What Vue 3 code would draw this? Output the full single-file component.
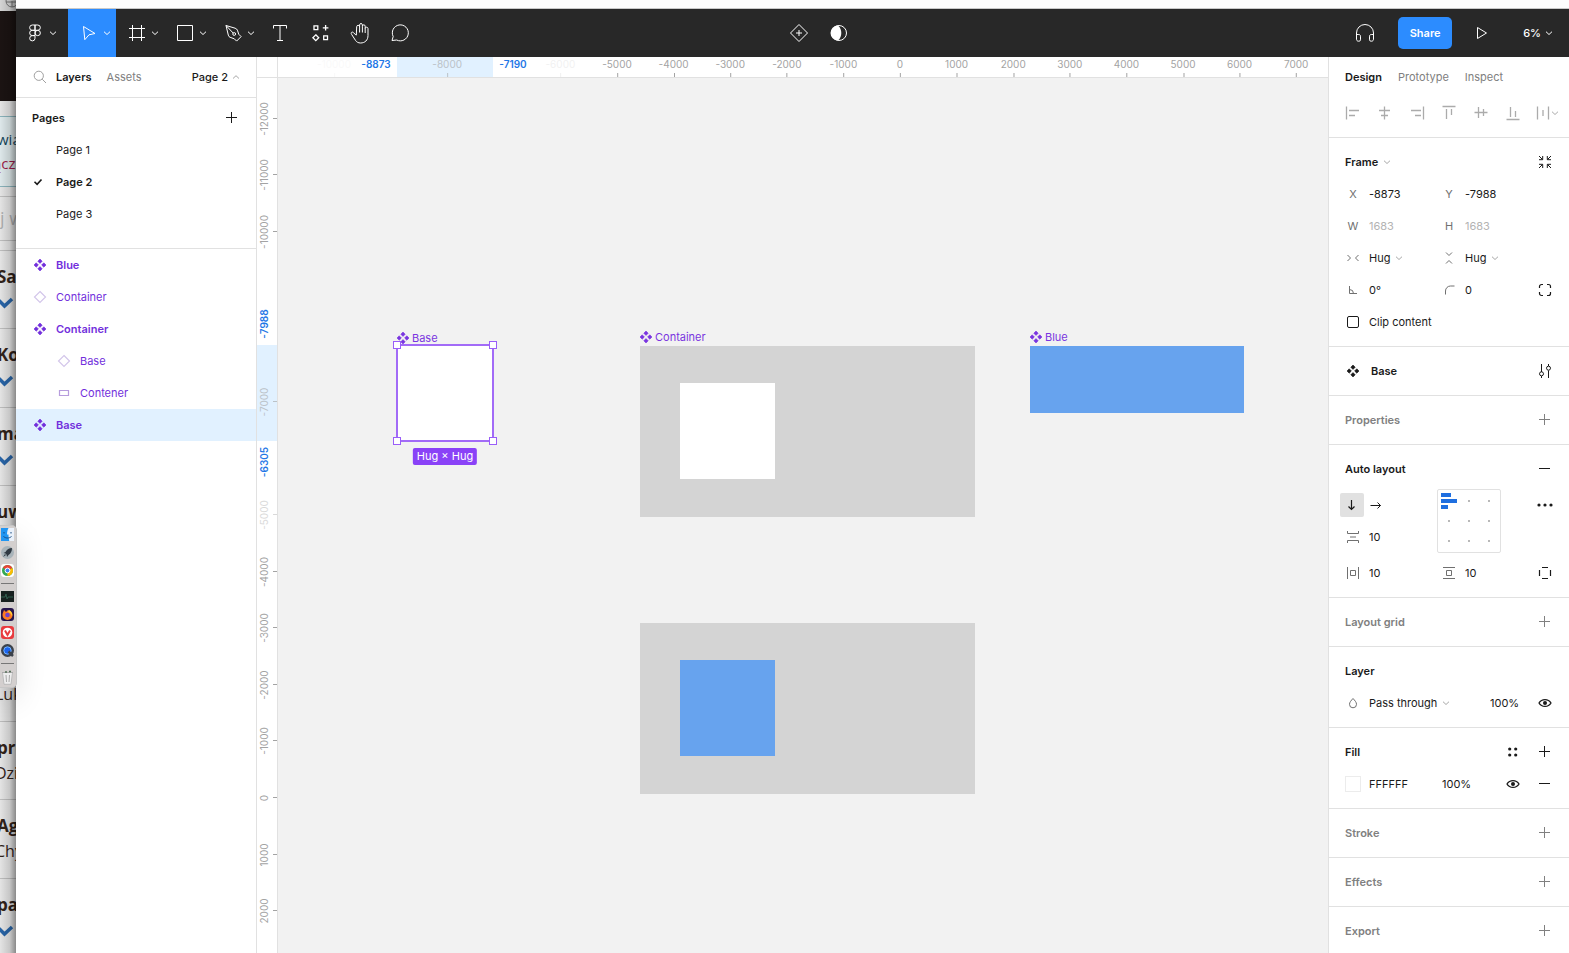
<script setup>
import { h, ref } from 'vue'

const quad = '<path d="M8 2l2.200 2.200L8 6.400 5.800 4.200zM8 9.600l2.200 2.200L8 14l-2.200-2.200zM4.200 5.800L6.400 8l-2.200 2.200L2 8zM11.800 5.800L14 8l-2.200 2.200L9.600 8z" fill="currentColor" stroke="currentColor" stroke-width=".6" stroke-linejoin="round"/>'
const shapes = {
  figma: '<path d="M12 4H9.300a2.650 2.650 0 0 0 0 5.300H12zM12 4h2.700a2.650 2.650 0 0 1 0 5.300H12zM12 9.300H9.300a2.650 2.650 0 0 0 0 5.300H12zM12 14.600H9.300A2.650 2.650 0 1 0 12 17.300z"/><circle cx="14.700" cy="12" r="2.650"/>',
  move: '<path d="M6.500 5.500l11.500 7-6 1.300-4.200 4.900z" stroke-linejoin="round"/>',
  frame: '<path d="M7.500 4v16M16.500 4v16M4 7.500h16M4 16.500h16"/>',
  rect: '<path d="M4.500 4.500h15v15h-15z"/>',
  pen: '<path d="M5 4.500l2.300 9.600c.2 1 .8 1.900 1.800 2.200l4.200 1.500 2.300 2.300 4.500-4.500-2.300-2.300-1.400-4.100c-.4-1-1.200-1.700-2.300-2zM5 4.500l7.300 7.700" stroke-linejoin="round"/><circle cx="13.200" cy="13" r="1.400"/>',
  text: '<path d="M5.500 7.500v-3h13v3M12 4.500v15M9 19.500h6"/>',
  resources: '<path d="M6 4.800h3.800v3.800H6zM15.700 14.800h3.800v3.800h-3.800zM17.600 4v5.600M14.800 6.800h5.600M7.800 13.800l2.900 2.900-2.900 2.900-2.900-2.900z" stroke-width="1.300"/>',
  hand: '<path d="M8 14.200L5.600 11.700c-.7-.7-1.600-.8-2.100-.3s-.4 1.200.1 2l4 6.100c1 1.500 2.600 2.500 5 2.500 4.300 0 7.400-2.800 7.400-7.500V7.600c0-.8-.6-1.400-1.400-1.400s-1.400.6-1.400 1.400V12M17.200 7.600V5.200c0-.8-.6-1.400-1.400-1.400s-1.400.6-1.400 1.400V11.500M14.400 5.200V3.900c0-.8-.6-1.400-1.400-1.400s-1.400.6-1.400 1.400V11.500M11.600 5.700c0-.8-.7-1.400-1.500-1.400s-1.400.6-1.400 1.400L8.300 14.200" stroke-linejoin="round"/>',
  comment: '<path d="M4 19.500l1.200-4A8 8 0 1 1 8.700 19z" stroke-linejoin="round"/>',
  diamondPlus: '<path d="M12 3.500l8.500 8.500-8.500 8.500L3.500 12zM12 9v6M9 12h6" stroke-linejoin="round"/>',
  contrast: '<circle cx="12" cy="12" r="7.500"/><path d="M12 4.500a7.500 7.500 0 0 0 0 15c2.300-2 3.300-4.600 3.300-7.500S14.300 6.500 12 4.500z" fill="currentColor" stroke="none" transform="translate(-1 0)"/>',
  headphones: '<path d="M3.500 18v-6a8.500 8.500 0 0 1 17 0v6M3.500 13.500h2.300c1 0 1.700.7 1.700 1.700v3.600c0 .8-.6 1.400-1.400 1.400h-.7c-1.100 0-1.900-.8-1.900-2zM20.500 13.500h-2.300c-1 0-1.700.7-1.700 1.700v3.600c0 .8.6 1.400 1.400 1.400h.7c1.100 0 1.900-.8 1.900-2z"/>',
  play: '<path d="M7.500 6.500v11l9-5.500z" stroke-linejoin="round"/>',
  down: '<path d="M3 4.700l3 2.800 3-2.800"/>',
  up: '<path d="M3 7.500l3-2.800 3 2.800"/>',
  search: '<circle cx="6.800" cy="6.800" r="4.600"/><path d="M10.200 10.200L14 14"/>',
  plus: '<path d="M7.500 2v11M2 7.500h11"/>',
  minus: '<path d="M2 7.500h11"/>',
  check: '<path d="M2.500 7.800l2.600 2.600L9.500 5.500" stroke-width="1.600"/>',
  component: quad,
  instance: '<path d="M8 2.500L13.500 8 8 13.500 2.500 8z" stroke-width="1.200"/>',
  layer: '<path d="M3.500 5.500h9v5h-9z" stroke-width="1.200"/>',
  alLeft: '<path d="M1.500 1.500v13M4 5.500h10M4 10.500h6" stroke-width="1.300"/>',
  alCenter: '<path d="M7.500 1.500v13M2 5.500h11M4 10.500h7" stroke-width="1.300"/>',
  alRight: '<path d="M14.500 1.500v13M2 5.500h10M6 10.500h6" stroke-width="1.300"/>',
  alTop: '<path d="M1.500 1.500h13M5.500 4v10M10.500 4v6" stroke-width="1.300"/>',
  alMiddle: '<path d="M1.500 7.500h13M5.500 2v11M10.500 4v7" stroke-width="1.300"/>',
  alBottom: '<path d="M1.500 14.500h13M5.500 2v10M10.500 6v6" stroke-width="1.300"/>',
  distribute: '<path d="M2.500 1.500v13M13.500 1.500v13M8 5v6" stroke-width="1.300"/>',
  shrink: '<path d="M2 2l3.500 3.500M2 5.700h3.700V2M14 2l-3.500 3.500M14 5.700h-3.700V2M2 14l3.500-3.500M2 10.300h3.700V14M14 14l-3.500-3.500M14 10.300h-3.700V14"/>',
  hugX: '<path d="M2.500 5l3 3-3 3M13.500 5l-3 3 3 3"/>',
  hugY: '<path d="M5 2.500l3 3 3-3M5 13.500l3-3 3 3"/>',
  angle: '<path d="M4.500 4v7.500H12M4.500 7.500a4 4 0 0 1 4 4"/>',
  radius: '<path d="M4.500 12.500V9a5 5 0 0 1 5-5h4"/>',
  corners: '<path d="M2.500 6V4.500a2 2 0 0 1 2-2H6M10 2.500h1.500a2 2 0 0 1 2 2V6M13.500 10v1.500a2 2 0 0 1-2 2H10M6 13.500H4.500a2 2 0 0 1-2-2V10" stroke-width="1.200"/>',
  tune: '<path d="M4.500 1v8M4.500 13v2M11.500 1v2M11.500 7.500V15"/><circle cx="4.500" cy="10.800" r="2"/><circle cx="11.500" cy="5.200" r="2"/>',
  arrowDown: '<path d="M7.500 3v9.500M4.500 9.500l3 3 3-3" stroke-width="1.200"/>',
  arrowRight: '<path d="M2.500 8.500h10M9.500 5.500l3 3-3 3"/>',
  gapY: '<path d="M2.500 2v2.500h11V2M2.500 14v-2.500h11V14M5 8h6"/>',
  padX: '<path d="M2.500 2v12M13.500 2v12M5.500 5.500h5v5h-5z"/>',
  padY: '<path d="M2 2.500h12M2 13.500h12M5.500 5.500h5v5h-5z"/>',
  padAll: '<path d="M5 2.500h6M5 13.500h6M2.500 5v6M13.500 5v6" stroke-width="1.200"/>',
  more: '<g fill="currentColor" stroke="none"><circle cx="2" cy="8" r="1.600"/><circle cx="8" cy="8" r="1.600"/><circle cx="14" cy="8" r="1.600"/></g>',
  styles: '<g fill="currentColor" stroke="none"><circle cx="4.700" cy="5" r="1.600"/><circle cx="10.700" cy="5" r="1.600"/><circle cx="4.700" cy="11" r="1.600"/><circle cx="10.700" cy="11" r="1.600"/></g>',
  drop: '<path d="M8 3.500c1.800 2 3.500 3.700 3.500 5.800a3.500 3.500 0 0 1-7 0C4.500 7.200 6.200 5.500 8 3.500z"/>',
  eye: '<path d="M2 8c2.800-4.600 9.200-4.600 12 0-2.800 4.600-9.200 4.600-12 0z" stroke-width="1.300"/><circle cx="8" cy="8" r="2" fill="currentColor" stroke="none"/>',
  tick: '<path d="M-1 6.500l5.500 5.500L12 5" stroke="#2a68ad" stroke-width="3.500"/>',
  globe: '<circle cx="12" cy="1" r="6"/><path d="M6 2h12M12 1v6"/>'
}
const Icon = (p) => h('svg', {
  width: p.s || 16, height: p.s || 16, viewBox: `0 0 ${p.s || 16} ${p.s || 16}`,
  fill: 'none', stroke: 'currentColor', 'aria-hidden': 'true', innerHTML: shapes[p.n]
})
Icon.props = ['n', 's']

const tools = [
  { n: 'figma', label: 'Main menu', menu: true, cls: 'main' },
  { n: 'move', label: 'Move', menu: true, cls: 'active' },
  { n: 'frame', label: 'Frame', menu: true },
  { n: 'rect', label: 'Rectangle', menu: true },
  { n: 'pen', label: 'Pen', menu: true },
  { n: 'text', label: 'Text' },
  { n: 'resources', label: 'Resources' },
  { n: 'hand', label: 'Hand' },
  { n: 'comment', label: 'Comment' }
]
const pages = ['Page 1', 'Page 2', 'Page 3']
const page = ref('Page 2')
const layers = [
  { t: 'Blue', n: 'component' },
  { t: 'Container', n: 'instance' },
  { t: 'Container', n: 'component' },
  { t: 'Base', n: 'instance', nested: true },
  { t: 'Contener', n: 'layer', nested: true },
  { t: 'Base', n: 'component', selected: true }
]
const aligns = ['alLeft', 'alCenter', 'alRight', 'alTop', 'alMiddle', 'alBottom']

const step = 56.6
const fade = { 'x-8000': 'dim', 'x-6000': 'ghost', 'x-10000': 'trace', 'y-7000': 'dim', 'y-5000': 'pale' }
const marks = (axis, values, zero) => values.map((v) => ({ v, at: zero + (v / 1000) * step, cls: fade[axis + v] }))
const xMarks = marks('x', [-10000, -8000, -6000, -5000, -4000, -3000, -2000, -1000, 0, 1000, 2000, 3000, 4000, 5000, 6000, 7000], 622)
const yMarks = marks('y', [-12000, -11000, -10000, -7000, -5000, -4000, -3000, -2000, -1000, 0, 1000, 2000], 720)

const mail = [
  { a: 'Sa', tick: true }, { a: 'Ko', tick: true }, { a: 'ma', tick: true }, { a: 'uw', tick: true },
  { a: '', b: '' }, { a: '', b: 'Luk' }, { a: 'pro', b: 'Dzi' }, { a: 'Ag', b: 'Chy' }, { a: 'pa', tick: true }
]
const clip = ref(false)
</script>

<template>
  <div class="desktop">
    <aside class="behind">
      <div class="tabbar"><Icon n="globe" :s="24" /></div>
      <div class="banner"></div>
      <div class="notice"><span>wią</span><span class="red">ącz</span></div>
      <div class="find">j w</div>
      <div v-for="(m, i) in mail" :key="i" class="mail">
        <b>{{ m.a }}</b>
        <Icon v-if="m.tick" n="tick" />
        <span v-else>{{ m.b }}</span>
      </div>
    </aside>

    <div class="window">
      <div class="titlebar"></div>
      <header class="toolbar">
        <div class="tools">
          <button v-for="t in tools" :key="t.n" class="tool" :class="[t.cls, { menu: t.menu }]" :aria-label="t.label">
            <Icon :n="t.n" :s="24" /><Icon v-if="t.menu" n="down" :s="12" />
          </button>
        </div>
        <div class="middle">
          <button class="tool" aria-label="Create component"><Icon n="diamondPlus" :s="24" /></button>
          <button class="tool" aria-label="Mask"><Icon n="contrast" :s="24" /></button>
        </div>
        <div class="actions">
          <button class="tool" aria-label="Audio"><Icon n="headphones" :s="24" /></button>
          <button class="share">Share</button>
          <button class="tool" aria-label="Present"><Icon n="play" :s="24" /></button>
          <button class="zoom">6%<Icon n="down" :s="12" /></button>
        </div>
      </header>

      <div class="body">
        <nav class="left">
          <div class="tabs">
            <button class="cell" aria-label="Search"><Icon n="search" /></button>
            <button class="tab on">Layers</button>
            <button class="tab">Assets</button>
            <button class="picker">Page 2<Icon n="up" :s="12" /></button>
          </div>
          <section class="pages">
            <div class="head"><h2>Pages</h2><button class="cell" aria-label="Add page"><Icon n="plus" /></button></div>
            <button v-for="p in pages" :key="p" class="item" :class="{ current: p === page }" @click="page = p">
              <span class="cell"><Icon v-if="p === page" n="check" /></span>{{ p }}
            </button>
          </section>
          <div class="layers">
            <button v-for="(l, i) in layers" :key="i" class="item" :class="[l.n, { nested: l.nested, selected: l.selected }]">
              <span class="cell"><Icon :n="l.n" /></span>{{ l.t }}
            </button>
          </div>
        </nav>

        <main class="stage">
          <div class="corner"></div>
          <div class="ruler rx">
            <div class="range"></div>
            <span v-for="m in xMarks" :key="m.v" class="mark" :class="m.cls" :style="{ left: m.at + 'px' }">{{ m.v }}</span>
            <span class="mark edge start">-8873</span>
            <span class="mark edge end">-7190</span>
          </div>
          <div class="ruler ry">
            <div class="range"></div>
            <span v-for="m in yMarks" :key="m.v" class="mark" :class="m.cls" :style="{ top: m.at + 'px' }"><i>{{ m.v }}</i></span>
            <span class="mark edge start"><i>-7988</i></span>
            <span class="mark edge end"><i>-6305</i></span>
          </div>
          <div class="canvas">
            <div class="node base">
              <span class="label"><Icon n="component" />Base</span>
              <i class="handle tl"></i><i class="handle tr"></i><i class="handle bl"></i><i class="handle br"></i>
              <span class="size">Hug × Hug</span>
            </div>
            <div class="node container one">
              <span class="label"><Icon n="component" />Container</span>
              <div class="inner"></div>
            </div>
            <div class="node container two"><div class="inner blue-fill"></div></div>
            <div class="node blue blue-fill"><span class="label"><Icon n="component" />Blue</span></div>
          </div>
        </main>

        <aside class="right">
          <section class="top">
            <div class="modes">
              <button class="tab on">Design</button><button class="tab">Prototype</button><button class="tab">Inspect</button>
            </div>
            <div class="row aligns">
              <button v-for="a in aligns" :key="a" class="cell" :aria-label="a"><Icon :n="a" /></button>
              <button class="cell" aria-label="Distribute"><Icon n="distribute" /><Icon n="down" :s="12" /></button>
            </div>
          </section>

          <section>
            <div class="head"><h2>Frame</h2><Icon class="faint" n="down" :s="12" /><button class="cell last" aria-label="Resize to fit"><Icon n="shrink" /></button></div>
            <div class="row">
              <label class="field"><span class="cell">X</span><input value="-8873" /></label>
              <label class="field"><span class="cell">Y</span><input value="-7988" /></label>
            </div>
            <div class="row">
              <label class="field"><span class="cell">W</span><input value="1683" disabled /></label>
              <label class="field"><span class="cell">H</span><input value="1683" disabled /></label>
            </div>
            <div class="row">
              <label class="field"><span class="cell"><Icon n="hugX" /></span><select class="hug" aria-label="Horizontal resizing"><option>Hug</option></select><Icon class="faint" n="down" :s="12" /></label>
              <label class="field"><span class="cell"><Icon n="hugY" /></span><select class="hug" aria-label="Vertical resizing"><option>Hug</option></select><Icon class="faint" n="down" :s="12" /></label>
            </div>
            <div class="row">
              <label class="field"><span class="cell"><Icon n="angle" /></span><input value="0°" aria-label="Rotation" /></label>
              <label class="field"><span class="cell"><Icon n="radius" /></span><input value="0" aria-label="Corner radius" /></label>
              <button class="cell last" aria-label="Independent corners"><Icon n="corners" /></button>
            </div>
            <div class="row"><label class="field wide"><span class="cell"><input v-model="clip" type="checkbox" /></span>Clip content</label></div>
          </section>

          <section>
            <div class="row"><span class="cell dark"><Icon n="component" /></span><h2 class="name">Base</h2><button class="cell last dark" aria-label="Configure component"><Icon n="tune" /></button></div>
          </section>

          <section class="empty"><div class="head"><h2>Properties</h2><button class="cell last" aria-label="Add property"><Icon n="plus" /></button></div></section>

          <section>
            <div class="head"><h2>Auto layout</h2><button class="cell last" aria-label="Remove auto layout"><Icon n="minus" /></button></div>
            <div class="auto">
              <div class="dir">
                <button class="pressed" aria-label="Vertical"><Icon n="arrowDown" /></button>
                <button aria-label="Horizontal"><Icon n="arrowRight" /></button>
              </div>
              <div class="pad"><div class="bars"><i></i><i></i><i></i></div><span v-for="n in 8" :key="n"></span></div>
              <button class="cell more" aria-label="Advanced layout"><Icon n="more" /></button>
              <label class="field gap"><span class="cell"><Icon n="gapY" /></span><input value="10" aria-label="Spacing" /></label>
            </div>
            <div class="row padding">
              <label class="field"><span class="cell"><Icon n="padX" /></span><input value="10" aria-label="Horizontal padding" /></label>
              <label class="field"><span class="cell"><Icon n="padY" /></span><input value="10" aria-label="Vertical padding" /></label>
              <button class="cell last" aria-label="Individual padding"><Icon n="padAll" /></button>
            </div>
          </section>

          <section class="empty"><div class="head"><h2>Layout grid</h2><button class="cell last" aria-label="Add grid"><Icon n="plus" /></button></div></section>

          <section>
            <div class="head"><h2>Layer</h2></div>
            <div class="row">
              <label class="field wide"><span class="cell"><Icon n="drop" /></span><select class="blend" aria-label="Blend mode"><option>Pass through</option></select><Icon class="faint" n="down" :s="12" /></label>
              <input class="percent last" value="100%" aria-label="Layer opacity" />
              <button class="cell" aria-label="Toggle layer"><Icon n="eye" /></button>
            </div>
          </section>

          <section>
            <div class="head"><h2>Fill</h2><button class="cell last" aria-label="Fill styles"><Icon n="styles" /></button><button class="cell" aria-label="Add fill"><Icon n="plus" /></button></div>
            <div class="row">
              <label class="field"><span class="cell"><i class="swatch"></i></span><input value="FFFFFF" aria-label="Fill colour" /></label>
              <input class="percent fillp" value="100%" aria-label="Fill opacity" />
              <button class="cell last" aria-label="Toggle fill"><Icon n="eye" /></button>
              <button class="cell" aria-label="Remove fill"><Icon n="minus" /></button>
            </div>
          </section>

          <section v-for="s in ['Stroke', 'Effects', 'Export']" :key="s" class="empty">
            <div class="head"><h2>{{ s }}</h2><button class="cell last" :aria-label="'Add ' + s"><Icon n="plus" /></button></div>
          </section>
        </aside>
      </div>
    </div>

    <div class="dock" aria-hidden="true">
      <svg viewBox="0 0 13 13"><path fill="#eaf1fa" d="M0 0h13v13H0z" /><path fill="#2196f3" d="M0 0h7.500c-1 2-1.500 4-1.500 6.500h1.500c0 2.500.3 4.500.8 6.500H0z" /><path d="M3 4v1.500M10 4v1.500M2.500 8.500c2.500 2 5.500 2 8 0" stroke="#174a80" fill="none" /></svg>
      <svg viewBox="0 0 13 13"><circle cx="6.500" cy="6.500" r="6.500" fill="#a9b4ba" /><path fill="#303942" d="M11 2C8 2 6 3.500 4.500 6L2.500 7l2 .5 1 1 .5 2.500 1.500-2C10 7.500 11 5 11 2zM4 8l-2 3 3-2z" /></svg>
      <svg viewBox="0 0 13 13"><rect width="13" height="13" rx="3" fill="#fff" /><circle cx="6.500" cy="6.500" r="5.500" fill="#34a853" /><path d="M6.500 6.500L1.800 3.700a5.500 5.500 0 0 1 9.600.3z" fill="#ea4335" /><path d="M6.500 6.500L11.400 4a5.500 5.500 0 0 1-4.900 8z" fill="#fbbc05" /><circle cx="6.500" cy="6.500" r="2.400" fill="#4285f4" stroke="#fff" /></svg>
      <hr />
      <svg viewBox="0 0 13 13"><path fill="#17201f" d="M0 1h13v11H0z" /><path d="M0 7h4l1-3 1 5 1-2h5" stroke="#2f5c4c" fill="none" /></svg>
      <svg viewBox="0 0 13 13"><rect width="13" height="13" rx="3" fill="#25144c" /><path fill="#ff7a22" d="M3 2l2 2 2-2c3 1 4.500 3 4.500 5a5 5 0 0 1-10 0C1.500 5 2.500 4 3 2z" /><circle cx="6.500" cy="7" r="2.300" fill="#7042c9" /><path fill="#ffd13b" d="M8 2c2.500 1 4 4 3 6.500C10.500 6 9.500 5 7 4z" /></svg>
      <svg viewBox="0 0 13 13"><rect width="13" height="13" rx="3" fill="#e83a3e" /><circle cx="6.500" cy="6.500" r="4.800" fill="#fff" /><path d="M4 4.500l2.500 4.500L9 4.500" stroke="#e83a3e" stroke-width="2" fill="none" /></svg>
      <svg viewBox="0 0 13 13"><circle cx="6.500" cy="6.500" r="6.500" fill="#3c424b" /><circle cx="6.500" cy="6.500" r="3.700" fill="#1c65ee" stroke="#79b6ff" /><path d="M7.500 7.500L12 12" stroke="#3c424b" stroke-width="2.500" /></svg>
      <hr />
      <svg class="bin" viewBox="0 0 13 15"><path d="M1.500 2.500L3 14.300h7L11.500 2.500z" fill="#eee" stroke="#bbb" /><path d="M1 2.500h11M5 5l.5 7M8.500 5L8 12" stroke="#aaa" /><path d="M4 2h2M8 1.500h2" stroke="#55705a" stroke-width="1.500" /></svg>
    </div>
  </div>
</template>

<style>
html, body { margin: 0; overflow: hidden; }
</style>

<style scoped>
* { box-sizing: border-box; }
.desktop { position: relative; display: flex; height: 100vh; overflow: hidden; font: 11px/16px Inter, "Liberation Sans", sans-serif; color: #1a1a1a; background: #fff; }
button, input, select { font: inherit; color: inherit; border: 0; padding: 0; margin: 0; background: none; outline: 0; border-radius: 0; min-width: 0; }
select { appearance: none; }
h2 { margin: 0; font-size: 11px; font-weight: 600; }
svg { flex: none; display: block; }

.behind { position: relative; width: 16px; flex: none; overflow: hidden; background: #ededed; font-family: "Open Sans", sans-serif; color: #33241a; white-space: nowrap; }
.behind::after { content: ""; position: absolute; inset: 0; background: linear-gradient(90deg, rgba(0,0,0,.04), rgba(0,0,0,.16) 60%, rgba(0,0,0,.42)); }
.tabbar { height: 11px; background: #ddd; color: #777; }
.banner { height: 90px; background: #1c1413; }
.notice { height: 71px; margin-top: 15px; padding-top: 10px; border: solid #8fb9c2; border-width: 1px 0; background: #e6f1f3; font-size: 15px; font-weight: 500; line-height: 24px; color: #164a60; display: flex; flex-direction: column; }
.notice span { margin-left: -3px; }
.notice .red { color: #a41e4c; margin-left: -7px; }
.find { height: 45px; margin: 9px 0; border: solid #c4c4c4; border-width: 1px 0; font-size: 18px; line-height: 43px; color: #b5b5b5; }
.mail { height: 78px; border-top: 1px solid #c4c4c4; padding-top: 14px; font-size: 16px; line-height: 24px; }
.mail:nth-child(even) { height: 79px; }
.mail b { display: block; height: 24px; font-size: 17px; margin-left: -3px; }
.mail span { display: block; margin: 1px 0 0 -5px; }
.mail svg { margin: 5px 0 0 0; }

.window { flex: 1; min-width: 0; display: flex; flex-direction: column; background: #fff; }
.titlebar { flex: none; height: 9px; background: #fdfdfd; border-bottom: 1px solid #c8c8c8; }
.toolbar { flex: none; height: 48px; display: grid; grid-template-columns: 1fr auto 1fr; background: #282828; color: #fff; }
.tools, .middle, .actions { display: flex; align-items: center; }
.tool { width: 40px; height: 48px; display: flex; align-items: center; justify-content: center; }
.tool.menu { width: 48px; justify-content: flex-start; padding-left: 9px; }
.tool.main { width: 52px; padding-left: 7px; }
.tool.active { background: #2c8cff; }
.middle { padding-left: 52px; }
.actions { justify-content: flex-end; padding-right: 14px; font-weight: 500; }
.share { width: 54px; height: 32px; border-radius: 5px; background: #2c8cff; font-weight: 600; margin: 0 10px 0 13px; }
.zoom { display: flex; align-items: center; gap: 2px; margin-left: 21px; }

.body { flex: 1; min-height: 0; display: flex; }
.left { width: 241px; flex: none; border-right: 1px solid #e1e1e1; }
.cell { width: 32px; height: 32px; flex: none; display: flex; align-items: center; justify-content: center; }
.tabs { height: 41px; display: flex; align-items: center; padding: 0 14px 0 8px; border-bottom: 1px solid #e1e1e1; }
.tabs .cell { color: #a0a0a0; }
.tab { color: #808080; }
.tab.on { color: #1a1a1a; font-weight: 600; }
.tabs .tab { margin-right: 15px; }
.picker { margin-left: auto; display: flex; align-items: center; gap: 2px; font-weight: 500; }
.picker svg, .faint { color: #a8a8a8; }
.pages { padding: 4px 0 18px; border-bottom: 1px solid #e1e1e1; }
.pages .head { display: flex; align-items: center; justify-content: space-between; padding: 0 8px 0 16px; }
.item { width: 100%; height: 32px; padding: 0 8px; display: flex; align-items: center; text-align: left; }
.item.current { font-weight: 600; }
.layers .item { color: #722fdc; }
.layers .nested { padding-left: 32px; }
.layers .component { font-weight: 600; }
.instance svg, .layer svg { color: #d3c6ea; }
.layer svg { color: #b79ddd; }
.layers .selected { background: #e1f1ff; }

.stage { flex: 1; min-width: 0; display: grid; grid-template: 21px 1fr / 21px 1fr; overflow: hidden; }
.corner, .ry { border-right: 1px solid #e1e1e1; }
.corner, .rx { border-bottom: 1px solid #e1e1e1; }
.ruler { position: relative; overflow: hidden; font-size: 10px; line-height: 14px; color: #a3a3a3; }
.mark { position: absolute; }
.rx .mark { top: 0; height: 20px; transform: translateX(-50%); }
.ry .mark { left: 0; width: 20px; height: 14px; transform: translateY(-50%); }
.mark::after { content: ""; position: absolute; background: #a3a3a3; }
.rx .mark::after { left: 50%; bottom: 0; width: 1px; height: 4px; }
.ry .mark::after { right: 0; top: 6px; width: 4px; height: 1px; }
.mark.edge::after { display: none; }
.ry i { position: absolute; left: 7px; top: 7px; font-style: normal; transform: translate(-50%, -50%) rotate(-90deg); }
.edge { color: #1f78e6; font-weight: 600; }
.dim { opacity: .6; }
.ghost { opacity: .15; }
.trace { opacity: .06; }
.pale { opacity: .4; }
.range { position: absolute; background: #e1f1ff; }
.rx .range { left: 119px; width: 96px; top: 0; height: 20px; }
.ry .range { top: 267px; height: 96px; left: 0; width: 20px; }
.rx .start { left: 98px; }
.rx .end { left: 235px; }
.ry .start { top: 246px; }
.ry .end { top: 384px; }
.canvas { position: relative; overflow: hidden; background: #f2f2f2; }
.node { position: absolute; }
.base { left: 118px; top: 266px; width: 98px; height: 98px; background: #fff; border: 2px solid #a26bf7; }
.container { left: 362px; width: 335px; height: 171px; background: #d4d4d4; }
.one { top: 268px; }
.two { top: 545px; }
.inner { position: absolute; left: 40px; top: 37px; width: 95px; height: 96px; background: #fff; }
.blue { left: 752px; top: 268px; width: 214px; height: 67px; }
.blue-fill { background: #67a3ee; }
.label { position: absolute; left: -2px; bottom: 100%; display: flex; align-items: center; gap: 1px; color: #7a35e0; padding-bottom: 1px; }
.base .label { left: -3px; padding: 0; }
.handle { position: absolute; width: 8px; height: 8px; background: #fff; border: 1px solid #9a5ef8; }
.tl, .tr { top: -5px; }
.bl, .br { bottom: -5px; }
.tl, .bl { left: -5px; }
.tr, .br { right: -5px; }
.size { position: absolute; left: 50%; top: 102px; transform: translateX(-50%); padding: 0 4px; border-radius: 2px; background: #8a42f7; color: #fff; white-space: nowrap; line-height: 17px; }

.right { width: 241px; flex: none; border-left: 1px solid #e1e1e1; overflow: hidden; }
.right section { padding: 8px 0; border-bottom: 1px solid #e1e1e1; }
.right section.top { padding: 0 0 8px; }
.modes { height: 40px; display: flex; align-items: center; padding-left: 16px; gap: 16px; }
.row, .right .head { height: 32px; display: flex; align-items: center; padding: 0 8px; }
.right .head { padding-left: 16px; }
.right h2 + svg { margin-left: 3px; }
.aligns { color: #ababab; }
.aligns svg + svg { margin: 0 -4px 0 -2px; }
.aligns .cell:last-child { justify-content: flex-start; padding-left: 6px; }
.last { margin-left: auto; }
.field { width: 96px; flex: none; display: flex; align-items: center; }
.field .cell { color: #707070; }
.field input { width: 60px; height: 24px; }
.field input:disabled { color: #b3b3b3; }
.field.wide { width: auto; }
.field input[type="checkbox"] { appearance: none; width: 12px; height: 12px; border: 1px solid #1a1a1a; border-radius: 2px; }
.hug { width: 24px; }
.blend { width: 71px; }
.percent { width: 39px; }
.fillp { width: 40px; margin-left: 9px; }
.name { margin-left: 2px; }
.empty { color: #808080; }
.swatch { width: 16px; height: 16px; border: 1px solid #ececec; }
.auto { display: grid; grid-template-columns: 96px 96px 32px; grid-template-rows: 32px 32px; padding: 4px 8px 0; }
.dir { display: flex; align-items: center; padding-left: 3px; }
.dir button { width: 24px; height: 24px; display: flex; align-items: center; justify-content: center; border-radius: 2px; }
.dir .pressed { background: #e1e1e1; }
.pad { grid-area: 1 / 2 / 3 / 3; width: 64px; height: 64px; margin-left: 4px; padding: 1px; border: 1px solid #e1e1e1; border-radius: 2px; display: grid; grid-template-columns: repeat(3, 20px); grid-template-rows: repeat(3, 20px); place-items: center; }
.more { grid-area: 1 / 3; }
.gap { grid-area: 2 / 1; }
.padding { margin-top: 4px; }
.pad span { width: 2px; height: 2px; background: #b8b8b8; }
.bars { display: grid; gap: 2px; }
.bars i { width: 10px; height: 4px; background: #1f6fe0; }
.bars i:nth-child(2) { width: 16px; }
.bars i:nth-child(3) { width: 7px; }

.dock { position: absolute; left: -4px; top: 525px; width: 21px; padding: 2px 3px 2px 4px; display: flex; flex-direction: column; gap: 5px; border-radius: 0 5px 5px 0; background: #d3cfce; border: 1px solid #c6c6c6; box-shadow: 0 12px 30px rgba(0, 0, 0, .12); }
.dock svg { width: 13px; height: 13px; }
.dock .bin { height: 15px; }
.dock hr { width: 13px; height: 1px; margin: 1px 0; border: 0; background: #777; }
</style>
